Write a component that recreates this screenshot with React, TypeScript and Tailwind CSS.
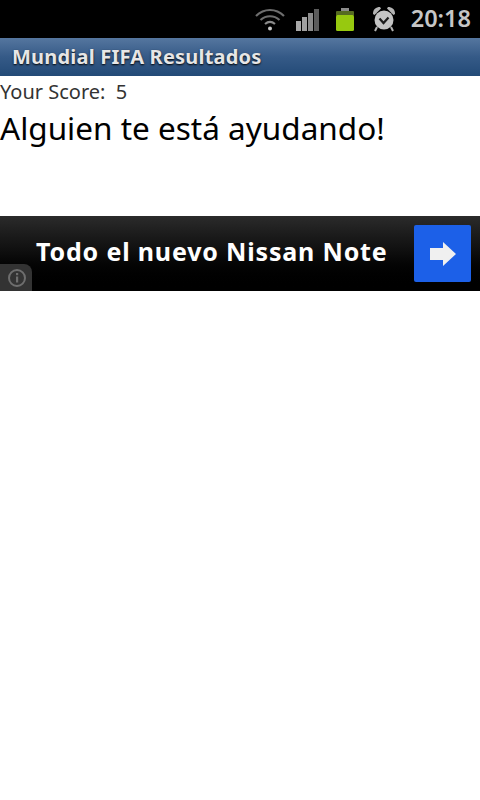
function StatusBar() {
  return (
    <div className="flex h-[38px] items-center justify-end bg-black pr-[9px]">
      <svg width="32" height="24" viewBox="0 0 32 24" fill="none" className="mr-[10px]">
        <path d="M2 9C10 1 22 1 30 9" stroke="#6e6e6e" strokeWidth="2.2" />
        <path d="M6.500 13C12 8 20 8 25.500 13" stroke="#6e6e6e" strokeWidth="2.200" />
        <path d="M11 17C14 14.500 18 14.500 21 17" stroke="#8a8a8a" strokeWidth="2.200" />
        <circle cx="16" cy="21.500" r="2" fill="#c8c8c8" />
      </svg>
      <div className="mr-[16px] flex h-[23px] items-end gap-[1px]">
        <div className="h-[10px] w-[5px] bg-[#a8a8a8]" />
        <div className="h-[14px] w-[5px] bg-[#a0a0a0]" />
        <div className="h-[18px] w-[5px] bg-[#8c8c8c]" />
        <div className="h-[22px] w-[5px] bg-[#5c5c5c]" />
      </div>
      <svg width="20" height="25" viewBox="0 0 20 25" className="mr-[17px]">
        <rect x="6" y="1" width="8" height="4" fill="#8c8c8c" />
        <rect x="1" y="4" width="18" height="5" rx="1" fill="#566b22" />
        <rect x="1" y="8" width="18" height="16" rx="1.500" fill="#97c90f" />
      </svg>
      <svg width="24" height="26" viewBox="0 0 24 26" className="mr-[15px]">
        <path d="M1 8C1 3 4 1 8 1L9 2.500 2.500 9Z" fill="#b4b4b4" />
        <path d="M23 8C23 3 20 1 16 1L15 2.500 21.500 9Z" fill="#b4b4b4" />
        <path d="M5 21L3 25M19 21L21 25" stroke="#b4b4b4" strokeWidth="2" />
        <circle cx="12" cy="14" r="9.500" fill="#c4c4c4" />
        <path d="M7.500 12.500L11.500 17L16.500 11.500" fill="none" stroke="#1c1c1c" strokeWidth="2.200" />
      </svg>
      <span className="font-['Noto_Sans',sans-serif] text-[23.5px] leading-none font-semibold text-[#c6c6c6]">20:18</span>
    </div>
  );
}

export default function App() {
  return (
    <div className="min-h-[800px] bg-white font-['Noto_Sans',sans-serif]">
      <StatusBar />
      <div className="flex h-[38px] items-center bg-gradient-to-b from-[#55769f] via-[#355a87] to-[#234a77] pl-[12px]">
        <span className="text-[20px] leading-none font-bold tracking-[0.2px] text-[#e6e6e6] [text-shadow:0_1px_2px_#000]">
          Mundial FIFA Resultados
        </span>
      </div>
      <div className="flex h-[140px] flex-col">
        <p className="mt-[4px] text-[20px] leading-[24px] whitespace-pre text-[#333]">Your Score:  5</p>
        <p className="mt-[1px] text-[31.5px] leading-[46px] text-black">Alguien te está ayudando!</p>
      </div>
      <div className="relative flex h-[75px] items-center bg-gradient-to-b from-[#2b2b2b] via-[#0d0d0d] to-black pr-[9px] pl-[36px]">
        <span className="mb-[4px] flex-1 text-[25px] leading-none font-bold tracking-[0.83px] whitespace-nowrap text-white">Todo el nuevo Nissan Note</span>
        <div className="flex h-[57px] w-[57px] items-center justify-center rounded-[2px] bg-[#1c60e8]">
          <svg width="28" height="24" viewBox="0 0 28 24">
            <path d="M1 6H14V0L27 12 14 24V18H1Z" fill="#f0f0f0" />
          </svg>
        </div>
        <div className="absolute bottom-0 left-0 flex h-[27px] w-[32px] items-center justify-center rounded-tr-[8px] bg-[#333]">
          <svg width="20" height="20" viewBox="0 0 20 20" fill="none">
            <circle cx="11" cy="10" r="8" stroke="#6e6e6e" strokeWidth="2" />
            <rect x="10" y="8.500" width="2.200" height="6" fill="#6e6e6e" />
            <rect x="10" y="5" width="2.200" height="2.200" fill="#6e6e6e" />
          </svg>
        </div>
      </div>
    </div>
  );
}
